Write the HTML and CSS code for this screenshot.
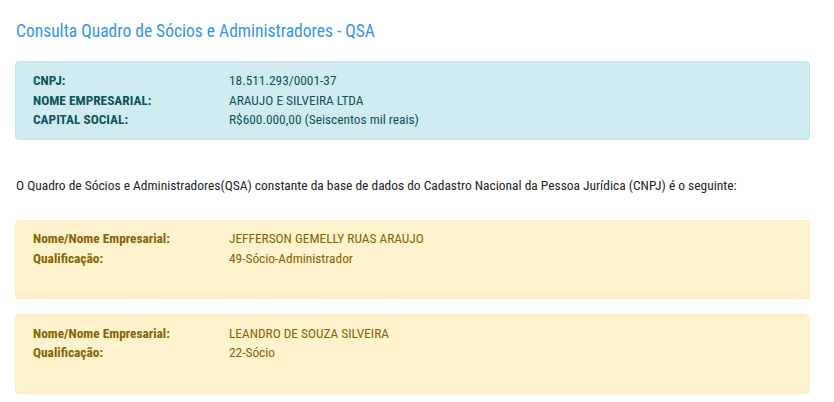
FILE: index.html
```
<!DOCTYPE html>
<html lang="pt-BR">
<head>
<meta charset="utf-8">
<title>Consulta QSA</title>
<link rel="stylesheet" href="styles.css">
</head>
<body>
<div class="page">
  <h1 class="title">Consulta Quadro de Sócios e Administradores - QSA</h1>

  <div class="alert alert-info">
    <div class="row"><span class="label">CNPJ:</span><span class="value">18.511.293/0001-37</span></div>
    <div class="row"><span class="label">NOME EMPRESARIAL:</span><span class="value">ARAUJO E SILVEIRA LTDA</span></div>
    <div class="row"><span class="label">CAPITAL SOCIAL:</span><span class="value">R$600.000,00 (Seiscentos mil reais)</span></div>
  </div>

  <p class="intro">O Quadro de Sócios e Administradores(QSA) constante da base de dados do Cadastro Nacional da Pessoa Jurídica (CNPJ) é o seguinte:</p>

  <div class="alert alert-warning">
    <div class="row"><span class="label">Nome/Nome Empresarial:</span><span class="value">JEFFERSON GEMELLY RUAS ARAUJO</span></div>
    <div class="row"><span class="label">Qualificação:</span><span class="value">49-Sócio-Administrador</span></div>
  </div>

  <div class="alert alert-warning">
    <div class="row"><span class="label">Nome/Nome Empresarial:</span><span class="value">LEANDRO DE SOUZA SILVEIRA</span></div>
    <div class="row"><span class="label">Qualificação:</span><span class="value">22-Sócio</span></div>
  </div>
</div>
</body>
</html>
```
FILE: styles.css
```
html, body {
  margin: 0;
  padding: 0;
  background: #ffffff;
}

body {
  font-family: Roboto, "Liberation Sans", sans-serif;
  font-stretch: condensed;
  color: #212529;
}

.page {
  padding: 21px 24px 0 15px;
  display: flex;
  flex-direction: column;
}

.title {
  margin: 0 0 19px 1px;
  font-size: 17.5px;
  line-height: 21px;
  font-weight: 400;
  color: #3595ee;
}

.alert {
  border: 1px solid transparent;
  border-radius: 4px;
  padding: 9px 17px 9.5px;
  font-size: 13.35px;
  line-height: 19.5px;
}

.alert-info {
  background: #d1ecf1;
  border-color: #bee5eb;
  color: #0c5460;
}

.alert-warning {
  background: #fff3cd;
  border-color: #ffeeba;
  color: #856404;
  padding-top: 8.5px;
  padding-bottom: 30px;
  margin-bottom: 15px;
}

.row {
  display: flex;
}

.label {
  width: 196px;
  flex: none;
  font-weight: 700;
}

.value {
  font-weight: 400;
}

.intro {
  margin: 35.5px 0 24px 1px;
  font-size: 13.45px;
  line-height: 20px;
  white-space: nowrap;
}
```
